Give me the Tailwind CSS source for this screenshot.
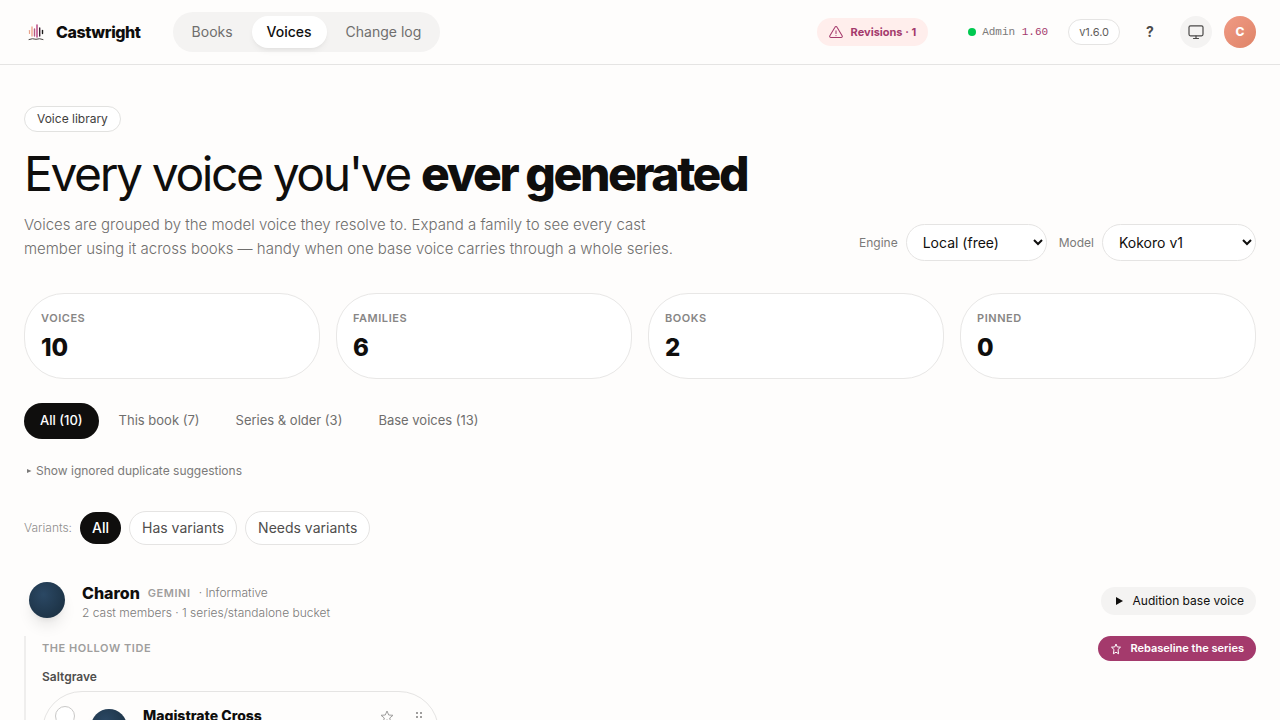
<!DOCTYPE html>
<html lang="en">
<head>
    <meta charset="UTF-8">
    <meta name="viewport" content="width=device-width, initial-scale=1.0">
    <title>Castwright - Voices</title>
    <script src="https://cdn.jsdelivr.net/npm/@tailwindcss/browser@4"></script>
</head>
<body class="bg-[#fefdfc] text-[#0f0e0d] font-['Inter',sans-serif] min-h-screen">
<header class="flex items-center justify-between h-[65px] px-6 border-b border-[#e5e4e3]">
    <div class="flex items-center">
        <a href="#" class="flex items-center gap-2 mr-8">
            <svg class="size-6" viewBox="0 0 24 24" fill="none" stroke-linecap="round">
                <path d="M5.5 10.500v3" stroke="#e8a48c" stroke-width="1.2"/>
                <path d="M8 7v9" stroke="#efa58d" stroke-width="1.4"/>
                <path d="M10.500 9v7" stroke="#b55a83" stroke-width="1.4"/>
                <path d="M13 5v12" stroke="#c0558c" stroke-width="1.600"/>
                <path d="M15.700 8v8" stroke="#3c2434" stroke-width="1.4"/>
                <path d="M18.500 10.500v3" stroke="#1c1a1a" stroke-width="1.400"/>
                <path d="M5 19.500q3.500-1.500 7-.2q3.500-1.300 7 .2" stroke="#4a4543" stroke-width="1"/>
            </svg>
            <span class="text-base font-extrabold tracking-tight">Castwright</span>
        </a>
        <nav class="flex items-center gap-1 p-1 rounded-full bg-[#f4f3f2] text-sm text-[#6f6e6d]">
            <a href="#" class="px-[15px] py-1.5 rounded-full">Books</a>
            <a href="#" class="px-[15px] py-1.5 rounded-full bg-white text-[#0f0e0d] font-medium shadow-md shadow-black/5">Voices</a>
            <a href="#" class="px-[15px] py-1.5 rounded-full">Change log</a>
        </nav>
    </div>
    <div class="flex items-center">
        <button class="flex items-center gap-2 h-7 px-3 mr-10 rounded-full bg-[#ffeeec] text-[11px] font-bold text-[#a43a6c]">
            <svg class="size-3.5" viewBox="0 0 24 24" fill="none" stroke="currentColor" stroke-width="1.8" stroke-linejoin="round" stroke-linecap="round">
                <path d="M13.800 3.800 22.500 18.500a2 2 0 0 1-1.800 3H3.300a2 2 0 0 1-1.800-3L10.200 3.800a2 2 0 0 1 3.600 0z"/>
                <path d="M12 10v4.500M12 18v.2"/>
            </svg>
            Revisions · 1
        </button>
        <a href="#" class="flex items-center gap-1.5 mr-5 font-['Liberation_Mono',monospace] text-[11px] text-[#7b7a79]">
            <span class="size-2 rounded-full bg-[#00c950]"></span>
            <span>Admin <span class="text-[#a43a6c]">1.60</span></span>
        </a>
        <button class="h-[26px] px-2.5 mr-3.5 rounded-full border border-[#e5e4e3] bg-white text-[11px] text-[#5f5e5d]">v1.6.0</button>
        <button class="size-8 mr-3.5 text-sm font-bold text-[#4a4948]" aria-label="Help">?</button>
        <button class="flex items-center justify-center size-8 mr-3 rounded-full bg-[#f4f3f2] text-[#4a4948]" aria-label="Theme">
            <svg class="size-4" viewBox="0 0 16 16" fill="none" stroke="currentColor" stroke-width="1.2" stroke-linecap="round" stroke-linejoin="round">
                <rect x="1" y="1.800" width="14" height="10" rx="1.500"/>
                <path d="M8 12v2.500M5.500 14.500h5"/>
            </svg>
        </button>
        <button class="size-8 rounded-full bg-linear-to-br from-[#f09a84] to-[#df8468] text-xs font-extrabold text-white">C</button>
    </div>
</header>

<main class="px-6 pt-10 pb-10">
    <section class="flex items-end justify-between gap-6">
        <div>
            <span class="inline-flex items-center h-[26px] px-3 rounded-full border border-[#e2e2e0] bg-white text-xs text-[#3f3e3d]">Voice library</span>
            <h1 class="mt-4 text-5xl leading-[52px] tracking-tighter">Every voice you've <span class="font-extrabold">ever generated</span></h1>
            <p class="mt-[13px] max-w-2xl text-[15px] leading-6 font-light text-[#6f6e6d]">Voices are grouped by the model voice they resolve to. Expand a family to see every cast member using it across books — handy when one base voice carries through a whole series.</p>
        </div>
        <div class="flex items-center gap-3 text-xs text-[#7b7a79]">
            <label class="flex items-center gap-2">Engine
                <select class="w-[141px] h-[37px] pl-3 rounded-full border border-[#e5e4e3] bg-white text-sm text-[#0f0e0d]">
                    <option>Local (free)</option>
                </select>
            </label>
            <label class="flex items-center gap-2">Model
                <select class="w-[154px] h-[37px] pl-3 rounded-full border border-[#e5e4e3] bg-white text-sm text-[#0f0e0d]">
                    <option>Kokoro v1</option>
                </select>
            </label>
        </div>
    </section>

    <section class="grid grid-cols-4 gap-4 mt-8">
        <div class="h-[86px] px-4 pt-4 rounded-[40px] border border-[#e8e7e6] bg-white">
            <p class="text-[11px] leading-4 font-semibold tracking-wider text-[#878685]">VOICES</p>
            <p class="mt-1.5 text-2xl font-extrabold">10</p>
        </div>
        <div class="h-[86px] px-4 pt-4 rounded-[40px] border border-[#e8e7e6] bg-white">
            <p class="text-[11px] leading-4 font-semibold tracking-wider text-[#878685]">FAMILIES</p>
            <p class="mt-1.5 text-2xl font-extrabold">6</p>
        </div>
        <div class="h-[86px] px-4 pt-4 rounded-[40px] border border-[#e8e7e6] bg-white">
            <p class="text-[11px] leading-4 font-semibold tracking-wider text-[#878685]">BOOKS</p>
            <p class="mt-1.5 text-2xl font-extrabold">2</p>
        </div>
        <div class="h-[86px] px-4 pt-4 rounded-[40px] border border-[#e8e7e6] bg-white">
            <p class="text-[11px] leading-4 font-semibold tracking-wider text-[#878685]">PINNED</p>
            <p class="mt-1.5 text-2xl font-extrabold">0</p>
        </div>
    </section>

    <div class="flex gap-1 mt-6 text-[13px] text-[#6f6e6d]">
        <button class="h-9 px-4 rounded-full bg-[#0f0e0d] font-medium text-white">All (10)</button>
        <button class="h-9 px-4 rounded-full">This book (7)</button>
        <button class="h-9 px-4 rounded-full">Series &amp; older (3)</button>
        <button class="h-9 px-4 rounded-full">Base voices (13)</button>
    </div>

    <button class="flex items-center gap-1 mt-6 px-0.5 text-xs text-[#7b7a79]">
        <svg class="size-1.5" viewBox="0 0 6 6" fill="currentColor"><path d="M1 1l4.500 2L1 5z"/></svg>
        Show ignored duplicate suggestions
    </button>

    <div class="flex items-center gap-2 mt-8 text-sm text-[#4f4e4d]">
        <span class="text-xs font-light text-[#8f8e8d]">Variants:</span>
        <button class="h-8 px-3 rounded-full bg-[#0f0e0d] font-medium text-white">All</button>
        <button class="h-[34px] px-3 rounded-full border border-[#e5e4e3] bg-white">Has variants</button>
        <button class="h-[34px] px-3 rounded-full border border-[#e5e4e3] bg-white">Needs variants</button>
    </div>

    <section class="mt-9">
        <div class="flex items-center justify-between">
            <div class="flex items-start gap-4 pl-[5px]">
                <span class="size-9 mt-px mr-px rounded-full bg-radial-[at_40%_35%] from-[#2b4864] to-[#182c3c] shadow-lg shadow-black/10"></span>
                <div>
                    <p class="flex items-center gap-2 leading-6">
                        <span class="text-base leading-6 font-extrabold">Charon</span>
                        <span class="text-[11px] font-semibold tracking-wider text-[#9f9e9d]">GEMINI</span>
                        <span class="text-xs font-light text-[#7b7a79]">· Informative</span>
                    </p>
                    <p class="text-xs font-light text-[#7b7a79]">2 cast members · 1 series/standalone bucket</p>
                </div>
            </div>
            <button class="flex items-center gap-2 h-7 px-3 rounded-full bg-[#f4f3f2] text-xs">
                <svg class="size-3" viewBox="0 0 12 12" fill="currentColor"><path d="M3 2l7 4-7 4z"/></svg>
                Audition base voice
            </button>
        </div>

        <div class="mt-[15px] pl-4 border-l-2 border-[#efeeed]">
            <div class="flex items-center justify-between">
                <h2 class="text-[11px] font-semibold tracking-wider text-[#9f9e9d]">THE HOLLOW TIDE</h2>
                <button class="flex items-center gap-2 h-[25px] px-3 rounded-full bg-[#a43a6c] text-[11px] font-semibold text-white">
                    <svg class="size-3" viewBox="0 0 12 12" fill="none" stroke="currentColor" stroke-linejoin="round"><path d="M6 1l1.200 2.900 3.300.3-2.500 2.300.6 4.300L6 9.200l-2.600 1.600.6-4.300L1.500 4.200l3.300-.3z"/></svg>
                    Rebaseline the series
                </button>
            </div>
            <h3 class="mt-2 text-xs font-semibold text-[#4f4e4d]">Saltgrave</h3>
            <div class="grid grid-cols-3 gap-3 mt-1.5">
                <article class="flex items-start h-24 px-3 pt-3.5 rounded-[40px] border border-[#e5e4e3]">
                    <input type="checkbox" aria-label="Select Magistrate Cross" class="appearance-none size-5 rounded-full border border-[#c9c8c7] bg-white">
                    <span class="size-9 ml-4 mt-[3px] rounded-full bg-radial-[at_40%_35%] from-[#2b4864] to-[#182c3c] shadow-lg shadow-black/10"></span>
                    <h4 class="flex-1 ml-4 text-sm font-extrabold">Magistrate Cross</h4>
                    <button class="mt-1 mr-[18px] text-[#9f9e9d]" aria-label="Pin">
                        <svg class="size-3.5" viewBox="0 0 14 14" fill="none" stroke="currentColor" stroke-linejoin="round"><path d="M7 1l1.700 4 4.300.3-3.300 2.700 1.100 4.200L7 9.900l-3.800 2.300L4.300 8 1 5.300 5.300 5z"/></svg>
                    </button>
                    <button class="mt-1 text-[#9f9e9d]" aria-label="Drag">
                        <svg class="size-3.5" viewBox="0 0 14 14" fill="currentColor"><path d="M4 2h2v2H4zM8 2h2v2H8zM4 6h2v2H4zM8 6h2v2H8zM4 10h2v2H4zM8 10h2v2H8z"/></svg>
                    </button>
                </article>
            </div>
        </div>
    </section>
</main>
</body>
</html>
